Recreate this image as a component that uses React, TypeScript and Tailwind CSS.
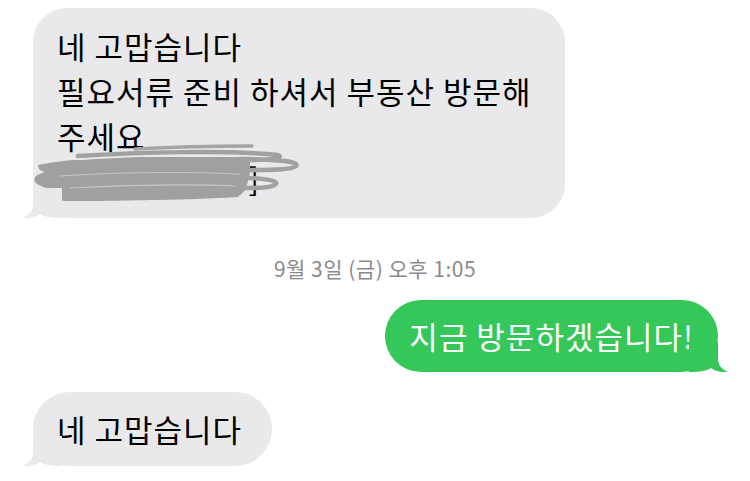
import React from "react";

// iMessage style chat — gray incoming, green outgoing
const FONT = { fontFamily: "'Noto Sans CJK KR', 'Noto Sans', sans-serif" };

function Tail({ color, right = false }: { color: string; right?: boolean }) {
  return (
    <svg
      viewBox="0 0 40 30"
      className={
        right
          ? "absolute bottom-0 right-[-11px] h-[30px] w-[40px] -scale-x-100"
          : "absolute bottom-0 left-[-11px] h-[30px] w-[40px]"
      }
    >
      <path
        d="M11 0 L11 17 C11 24 6 28 0.5 30 C8 30.6 14 29 18 26 C22 28.6 29 30 40 30 L40 0 Z"
        fill={color}
      />
    </svg>
  );
}

// 가림 낙서 (개인정보 가림)
function Scribble() {
  return (
    <svg
      viewBox="0 0 270 64"
      className="pointer-events-none absolute left-[0px] top-[135px] h-[64px] w-[270px]"
    >
      <path
        d="M5 22 C20 19 35 17 47 17 C80 15 100 14 117 14 L207 14 C212 15 216 16 217 17 L217 29 C216 36 214 42 212 47 C210 50 207 52 205 54 C170 56 140 57 117 57 C80 58 55 58 37 58 C28 58 20 57 15 56 C11 55 10 53 11 52 C14 50 18 48 22 47 C12 45 4 42 2 39 C1 36 2 34 3 33 C6 31 9 30 12 29 C8 28 5 26 5 22 Z"
        fill="#a0a0a0"
      />
      <path
        d="M207 16 C247 16 267 19 263 23 C259 27 237 27 217 27 M212 35 C232 35 245 38 243 41 C240 45 225 45 212 45 M15 55 C7 53 12 49 27 48 M45 13 C107 9 197 7 245 12 C252 15 237 17 217 17"
        fill="none"
        stroke="#a1a1a1"
        strokeWidth="4.5"
        strokeLinecap="round"
      />
      <path
        d="M102 6 C137 4 187 3 219 3"
        fill="none"
        stroke="#a4a4a4"
        strokeWidth="3.5"
        strokeLinecap="round"
      />
      <path
        d="M27 33 C87 29 157 29 207 31 M37 45 C97 42 157 41 202 43"
        fill="none"
        stroke="#c6c6c8"
        strokeWidth="1.2"
        strokeLinecap="round"
      />
    </svg>
  );
}

export default function App() {
  return (
    <div className="h-[481px] w-[750px] overflow-hidden bg-white" style={FONT}>
      <div className="flex flex-col pt-[8px]">
        {/* 받은 메시지 1 */}
        <div className="relative ml-[33px] w-[532px] rounded-[34px] bg-[#e9e9eb] px-[24px] py-[15px] text-[31px] leading-[45px] tracking-[1px] text-black">
          <p>네 고맙습니다</p>
          <p>필요서류 준비 하셔서 부동산 방문해</p>
          <p>주세요</p>
          <p className="flex items-center">
            <span>ㅈ</span>
            <span className="ml-[162px] -translate-y-[3px]">]</span>
          </p>
          <Scribble />
          <Tail color="#e9e9eb" />
        </div>

        {/* 날짜 */}
        <div className="mt-[38px] text-center text-[21px] leading-[24px] tracking-[0.5px] text-[#8a8a8e]">
          9월 3일 (금) 오후 1:05
        </div>

        {/* 보낸 메시지 */}
        <div className="relative mr-[32px] mt-[20px] self-end rounded-[36px] bg-[#35c759] py-[13px] pl-[24px] pr-[24px] text-[31px] leading-[46px] tracking-[1px] text-white">
          지금 방문하겠습니다!
          <Tail color="#35c759" right />
        </div>

        {/* 받은 메시지 2 */}
        <div className="relative ml-[33px] mt-[20px] self-start rounded-[37px] bg-[#e9e9eb] py-[14px] pl-[24px] pr-[30px] text-[31px] leading-[46px] tracking-[1px] text-black">
          네 고맙습니다
          <Tail color="#e9e9eb" />
        </div>
      </div>
    </div>
  );
}
